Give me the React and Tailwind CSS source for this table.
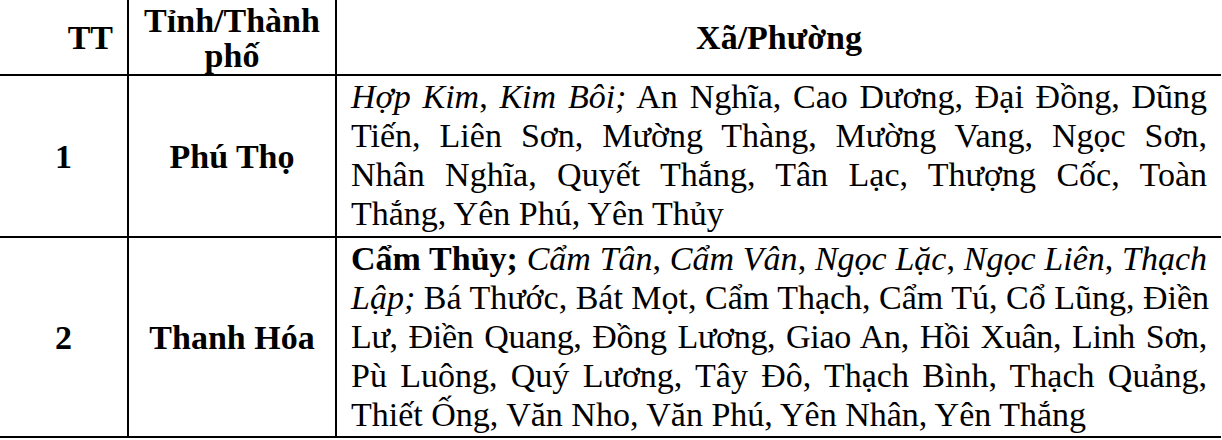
const J = "whitespace-nowrap [text-align-last:justify] text-justify";
const L = "whitespace-nowrap text-left";

export default function App() {
  const serif = { fontFamily: '"Liberation Serif", "Times New Roman", serif' };
  return (
    <div className="w-[1222px] h-[440px] bg-white text-black overflow-hidden" style={serif}>
      <div className="grid grid-cols-[129px_208px_884px] w-[1221px]">
        {/* Header */}
        <div className="h-[76px] border-r-2 border-b-2 border-black flex items-center justify-end pr-[14px] pt-[1px] font-bold text-[34px] leading-[39px]">
          TT
        </div>
        <div className="h-[76px] border-r-2 border-b-2 border-black flex flex-col items-center justify-center pt-[2px] font-bold text-[34px] leading-[35px] text-center">
          <span>Tỉnh/Thành</span>
          <span>phố</span>
        </div>
        <div className="h-[76px] border-b-2 border-black flex items-center justify-center pt-[1px] font-bold text-[34px] leading-[39px]">
          Xã/Phường
        </div>

        {/* Row 1 */}
        <div className="border-r-2 border-b-2 border-black flex items-center justify-center font-bold text-[34px] leading-[39px]">
          1
        </div>
        <div className="border-r-2 border-b-2 border-black flex items-center justify-center font-bold text-[34px] leading-[39px]">
          Phú Thọ
        </div>
        <div className="border-b-2 border-black px-[14px] pt-[1px] pb-[3px] text-[34px] leading-[39px]">
          <div className={J}><i>Hợp Kim</i>, <i>Kim Bôi;</i> An Nghĩa, Cao Dương, Đại Đồng, Dũng</div>
          <div className={J}>Tiến, Liên Sơn, Mường Thàng, Mường Vang, Ngọc Sơn,</div>
          <div className={J}>Nhân Nghĩa, Quyết Thắng, Tân Lạc, Thượng Cốc, Toàn</div>
          <div className={L}>Thắng, Yên Phú, Yên Thủy</div>
        </div>

        {/* Row 2 */}
        <div className="border-r-2 border-b-2 border-black flex items-center justify-center font-bold text-[34px] leading-[39px]">
          2
        </div>
        <div className="border-r-2 border-b-2 border-black flex items-center justify-center font-bold text-[34px] leading-[39px]">
          Thanh Hóa
        </div>
        <div className="border-b-2 border-black px-[14px] pt-[1px] pb-[2px] text-[34px] leading-[39px]">
          <div className={J}><b>Cẩm Thủy;</b> <i>Cẩm Tân</i>, <i>Cẩm Vân</i>, <i>Ngọc Lặc</i>, <i>Ngọc Liên</i>, <i>Thạch</i></div>
          <div className={J}><i>Lập;</i> Bá Thước, Bát Mọt, Cẩm Thạch, Cẩm Tú, Cổ Lũng, Điền</div>
          <div className={J + " tracking-[-0.3px]"}>Lư, Điền Quang, Đồng Lương, Giao An, Hồi Xuân, Linh Sơn,</div>
          <div className={J}>Pù Luông, Quý Lương, Tây Đô, Thạch Bình, Thạch Quảng,</div>
          <div className={L}>Thiết Ống, Văn Nho, Văn Phú, Yên Nhân, Yên Thắng</div>
        </div>
      </div>
    </div>
  );
}
